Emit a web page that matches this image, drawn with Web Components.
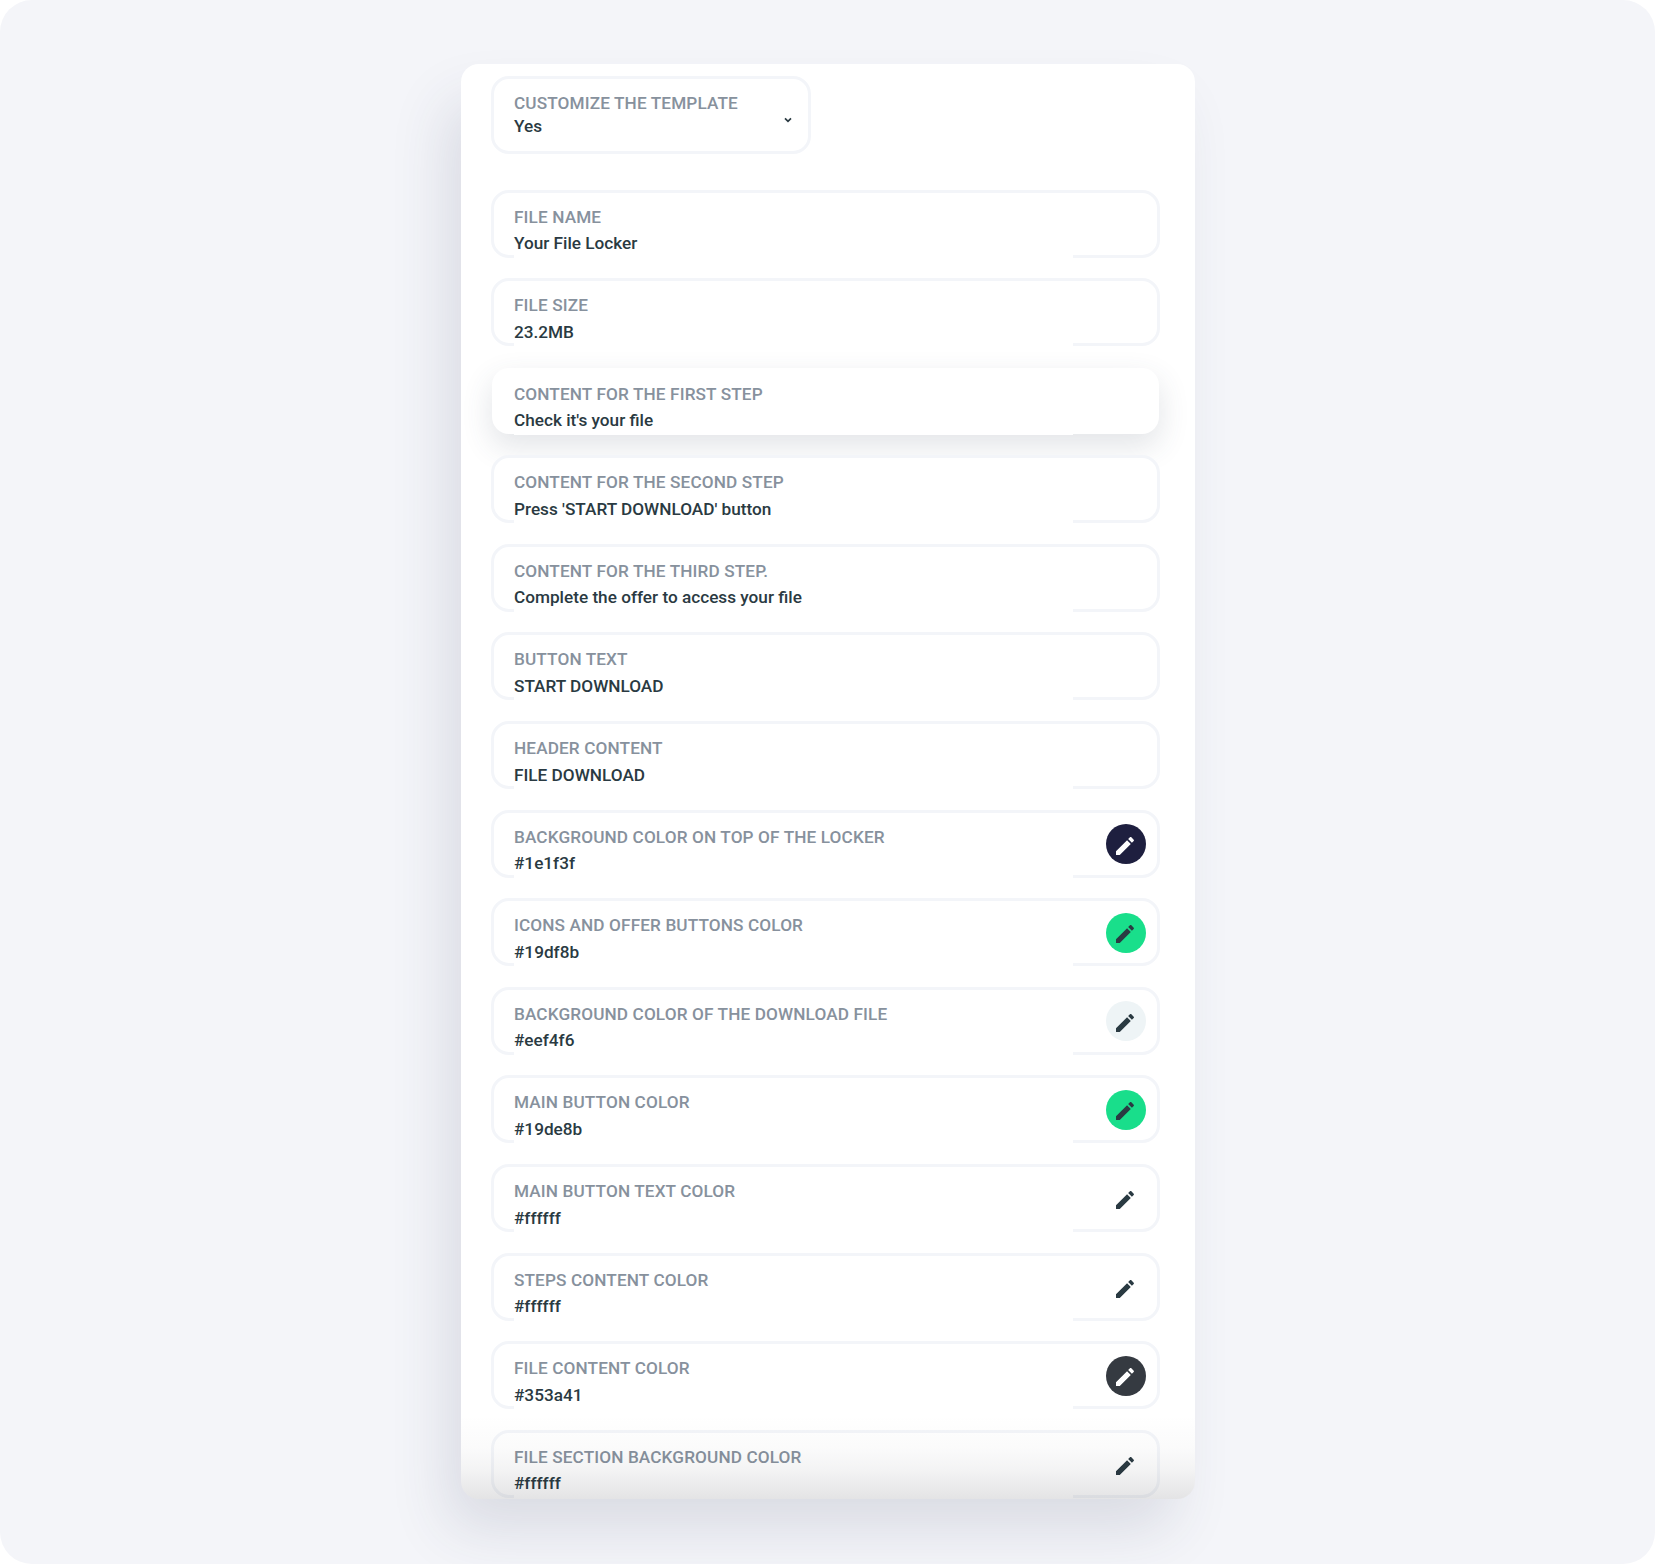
<!DOCTYPE html>
<html><head><meta charset="utf-8">
<style>
html,body{margin:0;padding:0;background:#fff;}
body{width:1655px;height:1564px;overflow:hidden;font-family:Roboto,"Liberation Sans",sans-serif;}
</style></head>
<body>
<template id="t-page"><style>
:host{display:block;width:1655px;height:1564px;box-sizing:border-box;background:#f4f5f9;border-radius:32px;padding:64px 0 0 461px;}
</style><slot></slot></template>

<template id="t-card"><style>
:host{display:block;position:relative;width:734px;height:1435px;box-sizing:border-box;background:#fff;border-radius:18px;box-shadow:-18px 34px 60px -6px rgba(50,58,90,.14);}
.clip{height:100%;box-sizing:border-box;overflow:hidden;padding:12px 35px 0 30px;border-radius:18px;}
.fade{position:absolute;left:0;right:0;bottom:0;height:84px;border-radius:0 0 18px 18px;pointer-events:none;
background:linear-gradient(to bottom,rgba(30,30,40,0) 0%,rgba(30,30,40,.02) 40%,rgba(30,30,40,.05) 65%,rgba(30,30,40,.12) 100%);}
.list{display:flex;flex-direction:column;gap:20.6px;margin-top:35.5px;}
</style><div class="clip"><slot name="head"></slot><div class="list"><slot></slot></div></div><div class="fade"></div></template>

<template id="t-select"><style>
:host{display:block;width:320px;height:78px;box-sizing:border-box;border:3px solid #f3f5f9;border-radius:18px;position:relative;padding:13px 0 0 20px;}
.l{font:500 17.2px/23px Roboto,sans-serif;color:#87919d;letter-spacing:.12px;}
.v{font:500 17.2px/23px Roboto,sans-serif;color:#2a3a42;}
svg{position:absolute;left:289px;top:37px;}
</style><div class="l"><slot name="label"></slot></div><div class="v"><slot name="value"></slot></div>
<svg width="10" height="8" viewBox="0 0 10 8"><path d="M2 2.4 5 5.4 8 2.4" fill="none" stroke="#2a3a42" stroke-width="1.7"/></svg></template>

<template id="t-edit"><style>
:host{display:block;width:40px;height:40px;border-radius:50%;background:var(--sw,transparent);position:relative;}
svg{position:absolute;left:6.5px;top:9.5px;width:24px;height:24px;fill:var(--ic,#2a3a42);}
</style><svg viewBox="0 0 24 24"><path d="M3 17.25V21h3.75L17.81 9.94l-3.75-3.75L3 17.25zM20.71 7.04c.39-.39.39-1.02 0-1.41l-2.34-2.34c-.39-.39-1.02-.39-1.41 0l-1.83 1.83 3.75 3.75 1.83-1.83z"/></svg></template>

<template id="t-field"><style>
:host{display:block;height:68px;box-sizing:border-box;border:3px solid #f3f5f9;border-radius:18px;position:relative;padding:13px 0 0 20px;background:#fff;}
:host([focused]){border-color:transparent;box-shadow:0 12px 30px rgba(60,70,90,.14);background-clip:padding-box;}
:host::after{content:"";position:absolute;left:20px;width:559px;bottom:-3px;height:3px;background:#fff;}
:host([focused])::after{bottom:-3.5px;height:3.5px;}
.l{font:500 17.2px/23px Roboto,sans-serif;color:#87919d;letter-spacing:.12px;}
.v{font:500 17.2px/23px Roboto,sans-serif;color:#2a3a42;margin-top:3.6px;white-space:nowrap;}
.i{position:absolute;right:11px;top:11.5px;}
</style><div class="l"><slot name="label"></slot></div><div class="v"><slot name="value"></slot></div><div class="i"><slot name="icon"></slot></div></template>

<app-page><form-card>
<select-field slot="head"><span slot="label">CUSTOMIZE THE TEMPLATE</span><span slot="value">Yes</span></select-field>
<text-field><span slot="label">FILE NAME</span><span slot="value">Your File Locker</span></text-field>
<text-field><span slot="label">FILE SIZE</span><span slot="value">23.2MB</span></text-field>
<text-field focused><span slot="label">CONTENT FOR THE FIRST STEP</span><span slot="value">Check it's your file</span></text-field>
<text-field><span slot="label">CONTENT FOR THE SECOND STEP</span><span slot="value">Press 'START DOWNLOAD' button</span></text-field>
<text-field><span slot="label">CONTENT FOR THE THIRD STEP.</span><span slot="value">Complete the offer to access your file</span></text-field>
<text-field><span slot="label">BUTTON TEXT</span><span slot="value">START DOWNLOAD</span></text-field>
<text-field><span slot="label">HEADER CONTENT</span><span slot="value">FILE DOWNLOAD</span></text-field>
<text-field><span slot="label">BACKGROUND COLOR ON TOP OF THE LOCKER</span><span slot="value">#1e1f3f</span><edit-icon slot="icon" style="--sw:#1e1f3f;--ic:#fff"></edit-icon></text-field>
<text-field><span slot="label">ICONS AND OFFER BUTTONS COLOR</span><span slot="value">#19df8b</span><edit-icon slot="icon" style="--sw:#19df8b"></edit-icon></text-field>
<text-field><span slot="label">BACKGROUND COLOR OF THE DOWNLOAD FILE</span><span slot="value">#eef4f6</span><edit-icon slot="icon" style="--sw:#eef4f6"></edit-icon></text-field>
<text-field><span slot="label">MAIN BUTTON COLOR</span><span slot="value">#19de8b</span><edit-icon slot="icon" style="--sw:#19de8b"></edit-icon></text-field>
<text-field><span slot="label">MAIN BUTTON TEXT COLOR</span><span slot="value">#ffffff</span><edit-icon slot="icon"></edit-icon></text-field>
<text-field><span slot="label">STEPS CONTENT COLOR</span><span slot="value">#ffffff</span><edit-icon slot="icon"></edit-icon></text-field>
<text-field><span slot="label">FILE CONTENT COLOR</span><span slot="value">#353a41</span><edit-icon slot="icon" style="--sw:#353a41;--ic:#fff"></edit-icon></text-field>
<text-field><span slot="label">FILE SECTION BACKGROUND COLOR</span><span slot="value">#ffffff</span><edit-icon slot="icon"></edit-icon></text-field>
</form-card></app-page>
<script>
for(const [n,t] of [["app-page","t-page"],["form-card","t-card"],["select-field","t-select"],["edit-icon","t-edit"],["text-field","t-field"]]){
  customElements.define(n,class extends HTMLElement{constructor(){super();this.attachShadow({mode:"open"}).appendChild(document.getElementById(t).content.cloneNode(true));}});
}
</script>
</body></html>
